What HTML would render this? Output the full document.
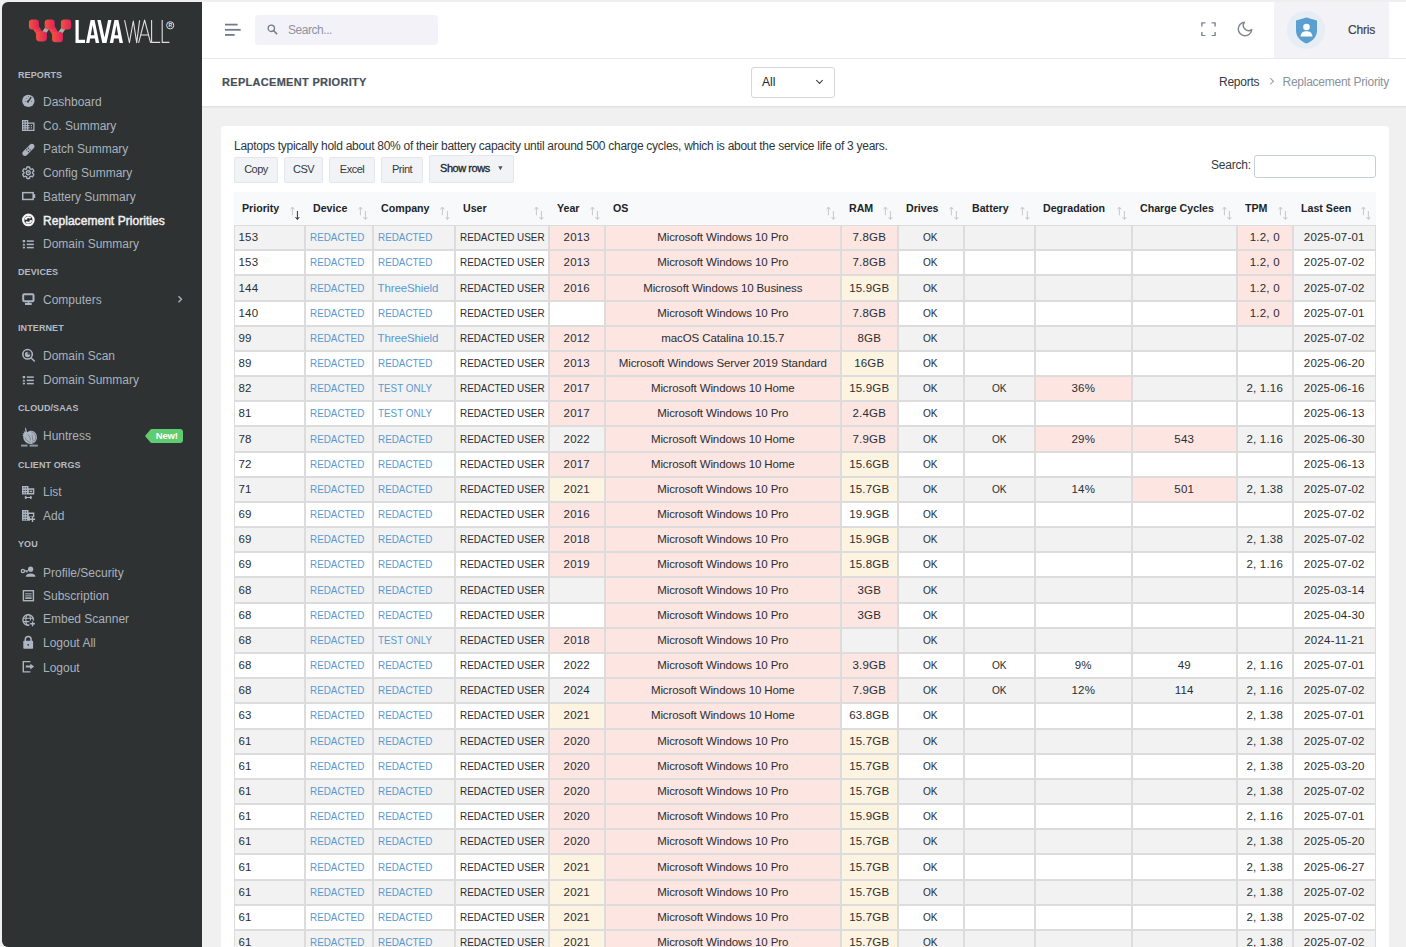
<!DOCTYPE html>
<html><head><meta charset="utf-8">
<style>
*{box-sizing:border-box}
html,body{margin:0;padding:0}
body{width:1406px;height:947px;overflow:hidden;background:#f0f0f0;font-family:"Liberation Sans",sans-serif;position:relative;color:#343a40}
.abs{position:absolute}
#topstrip{left:0;top:0;width:1406px;height:2px;background:#efefef}
#sidebar{left:2px;top:2px;width:200px;height:945px;background:#2e3232;border-top-left-radius:6px;border-bottom-left-radius:6px}
#topbar{left:202px;top:2px;width:1204px;height:57px;background:#fff;border-bottom:1px solid #e9e9ef}
#titlebar{left:202px;top:59px;width:1204px;height:48px;background:#fff;border-bottom:1px solid #e2e2e2;box-shadow:0 1px 1px rgba(0,0,0,.03)}
#card{left:221px;top:126px;width:1168px;height:900px;background:#fff;border-radius:4px}
.sh{position:absolute;left:18px;font-size:9px;font-weight:bold;color:#b4bac3;letter-spacing:0.1px}
.si{position:absolute;left:43px;font-size:12px;color:#a9b1bd;white-space:nowrap}
.si.act{color:#f0f0f0;font-weight:normal;-webkit-text-stroke:0.45px #f0f0f0;letter-spacing:0.05px}
.ic{position:absolute;left:21px;width:14px;height:14px}
/* table */
#tbl{position:absolute;left:234px;top:192px;border-collapse:separate;border-spacing:0;table-layout:fixed;width:1142px;font-size:12px;color:#2a2e33}
#tbl th{height:33px;background:#f8f9fa;text-align:left;font-weight:bold;padding:0 0 1px 8px;position:relative;font-size:11.5px;color:#212529;border:0}
#tbl th svg.si2{position:absolute;right:3px;top:13.7px}
.k{display:inline-block;letter-spacing:0;transform:scaleX(0.859);transform-origin:0 50%}
.kc{display:inline-block;letter-spacing:0;transform:scaleX(0.88);transform-origin:50% 50%}
.m{letter-spacing:-0.11px}
.hh{display:inline-block;transform:scaleX(0.925);transform-origin:0 50%}
#tbl tr{height:25.178px}
#tbl td{border:1px solid #dcdcdc;vertical-align:top;padding:0 4px 0 3.5px;line-height:14px;white-space:nowrap;overflow:hidden;font-size:11.5px;letter-spacing:0.2px}
#tbl tr.o td{background:#f2f2f2}
#tbl tr.e td{background:#fff}
#tbl td.c{text-align:center}
#tbl tr td.p{background:#fde5e1}
#tbl tr td.y{background:#fdf3e1}
#tbl td.lk{color:#5a99d0}
.btn{position:absolute;top:157px;height:26px;background:#f1f3f6;border:1px solid #e3e6ea;border-radius:2px;font-size:11px;letter-spacing:-0.5px;color:#343a40;text-align:center;line-height:22.5px}
</style></head><body>
<div id="topstrip" class="abs"></div>
<div id="sidebar" class="abs"></div>
<svg class="abs" style="left:0;top:0" width="200" height="60" viewBox="0 0 200 60">
<defs><linearGradient id="lg" x1="0" x2="1" y1="0" y2="0"><stop offset="0" stop-color="#f0553f"/><stop offset="1" stop-color="#e2225b"/></linearGradient></defs>
<g stroke="#a7afb2" stroke-width="4.2"><line x1="41.5" y1="36.3" x2="49.7" y2="24.6"/><line x1="57.5" y1="36.9" x2="66" y2="24.6"/></g>
<g fill="url(#lg)" stroke="url(#lg)">
<line x1="33.9" y1="24.6" x2="41.5" y2="36.3" stroke-width="6.5"/><line x1="49.7" y1="24.6" x2="57.5" y2="36.9" stroke-width="6.5"/>
</g>
<g fill="url(#lg)">
<rect x="28.9" y="19.6" width="10" height="10" rx="3.3"/><rect x="44.7" y="19.6" width="10" height="10" rx="3.3"/><rect x="60.9" y="19.6" width="10.3" height="10" rx="3.3"/>
<rect x="36.1" y="31.4" width="10.8" height="10" rx="3.3"/><rect x="52.1" y="31.7" width="10.8" height="10.5" rx="3.3"/>
</g>
<g fill="#fff">
<path d="M75.5 20h3.2v19.8h6.3V43h-9.5z"/>
<path fill-rule="evenodd" d="M86 43l4.6-23h4l4.6 23h-3.5l-.8-4.4h-4.7l-.8 4.4z M90.8 35.3h3.6l-1.8-10z"/>
<path d="M97.3 20h3.4l3.8 17.5 3.6-17.5h3.4l-5 23h-4.2z"/>
<path fill-rule="evenodd" d="M109.8 43l4.6-23h4l4.6 23h-3.5l-.8-4.4h-4.7l-.8 4.4z M114.6 35.3h3.6l-1.8-10z"/>
</g>
<g fill="none" stroke="#dedede" stroke-width="1.1" stroke-linejoin="round">
<polyline points="124.6,20.2 129.4,42.6 133.3,21 136.7,42.6 139.6,20.2"/>
<polyline points="138.6,42.8 144.6,20 150.6,42.8"/><line x1="140.6" y1="35" x2="148.6" y2="35"/>
<polyline points="151.6,20 151.6,42.4 160.2,42.4"/>
<polyline points="162.2,20 162.2,42.4 169.4,42.4"/>
<circle cx="170.2" cy="25.3" r="3.6" stroke-width="1"/>
</g>
<text x="170.2" y="27.2" font-size="5" font-family="Liberation Sans" font-weight="bold" fill="#e8e8e8" text-anchor="middle">R</text>
</svg>
<svg class="abs" style="left:0;top:0" width="200" height="700" viewBox="0 0 200 700"><circle cx="28.35" cy="100.95" r="6.15" fill="#adb5c2"/><line x1="28" y1="101.6" x2="30.9" y2="97.6" stroke="#2e3232" stroke-width="1.4" stroke-linecap="round"/><circle cx="27.9" cy="101.6" r="1.1" fill="#2e3232"/><circle cx="25.3" cy="101.2" r="0.45" fill="#2e3232"/><circle cx="26.3" cy="98.2" r="0.45" fill="#2e3232"/><circle cx="28.4" cy="96.7" r="0.45" fill="#2e3232"/><circle cx="31.5" cy="101.2" r="0.45" fill="#2e3232"/><g transform="translate(20.75,118.2) scale(0.625,0.61)" fill="#adb5c2"><path d="M18,15H16V17H18M18,11H16V13H18M20,19H12V17H14V15H12V13H14V11H12V9H20M10,7H8V5H10M10,11H8V9H10M10,15H8V13H10M10,19H8V17H10M6,7H4V5H6M6,11H4V9H6M6,15H4V13H6M6,19H4V17H6M12,7V3H2V21H22V7H12Z"/></g><g transform="translate(21.1,142.6) scale(0.61)"><path d="M20.7 3.3c-1.7-1.7-4.3-1.7-6 0L3.3 14.7c-1.7 1.7-1.7 4.3 0 6s4.3 1.7 6 0L20.7 9.3c1.7-1.7 1.7-4.3 0-6z" fill="#adb5c2"/><circle cx="12" cy="9.3" r="1.1" fill="#2e3232"/><circle cx="9.3" cy="12" r="1.1" fill="#2e3232"/><circle cx="14.7" cy="12" r="1.1" fill="#2e3232"/><circle cx="12" cy="14.7" r="1.1" fill="#2e3232"/></g><g transform="translate(21.35,165.85) scale(0.575)"><path d="M12,15.5A3.5,3.5 0 0,1 8.5,12A3.5,3.5 0 0,1 12,8.5A3.5,3.5 0 0,1 15.5,12A3.5,3.5 0 0,1 12,15.5M19.43,12.97C19.47,12.65 19.5,12.33 19.5,12C19.5,11.67 19.47,11.34 19.43,11L21.54,9.37C21.73,9.22 21.78,8.95 21.66,8.73L19.66,5.27C19.54,5.05 19.27,4.96 19.05,5.05L16.56,6.05C16.04,5.66 15.5,5.32 14.87,5.07L14.5,2.42C14.46,2.18 14.25,2 14,2H10C9.75,2 9.54,2.18 9.5,2.42L9.13,5.07C8.5,5.32 7.96,5.66 7.44,6.05L4.95,5.05C4.73,4.96 4.46,5.05 4.34,5.27L2.34,8.73C2.21,8.95 2.27,9.22 2.46,9.37L4.57,11C4.53,11.34 4.5,11.67 4.5,12C4.5,12.33 4.53,12.65 4.57,12.97L2.46,14.63C2.27,14.78 2.21,15.05 2.34,15.27L4.34,18.73C4.46,18.95 4.73,19.03 4.95,18.95L7.44,17.94C7.96,18.34 8.5,18.68 9.13,18.93L9.5,21.58C9.54,21.82 9.75,22 10,22H14C14.25,22 14.46,21.82 14.5,21.58L14.87,18.93C15.5,18.67 16.04,18.34 16.56,17.94L19.05,18.95C19.27,19.03 19.54,18.95 19.66,18.73L21.66,15.27C21.78,15.05 21.73,14.78 21.54,14.63L19.43,12.97Z" fill="none" stroke="#adb5c2" stroke-width="2.3" stroke-linejoin="round"/><circle cx="12" cy="12" r="1.3" fill="#adb5c2"/></g><rect x="22.75" y="192.65" width="10.4" height="6.8" fill="none" stroke="#adb5c2" stroke-width="1.5"/><rect x="33.1" y="194.2" width="2.1" height="3.8" fill="#adb5c2"/><circle cx="28.35" cy="219.95" r="5.2" fill="none" stroke="#f4f4f4" stroke-width="2.3"/><path d="M25.6 219.4 A2.8 2.8 0 0 1 30.6 218.3" fill="none" stroke="#f4f4f4" stroke-width="1.9"/><path d="M31.1 220.5 A2.8 2.8 0 0 1 26.1 221.6" fill="none" stroke="#f4f4f4" stroke-width="1.9"/><path d="M24.3 219.6 L27.3 219.6 L25.8 217.2Z" fill="#f4f4f4"/><path d="M32.4 220.3 L29.4 220.3 L30.9 222.7Z" fill="#f4f4f4"/><rect x="22.7" y="240.0" width="2.4" height="2.2" fill="#adb5c2"/><path d="M23.9 243.0 L25.4 245.5 L22.4 245.5Z" fill="#adb5c2"/><circle cx="23.9" cy="247.6" r="1.15" fill="#adb5c2"/><rect x="26.8" y="240.35" width="7" height="1.5" fill="#adb5c2"/><rect x="26.8" y="243.65" width="7" height="1.5" fill="#adb5c2"/><rect x="26.8" y="246.85" width="7" height="1.5" fill="#adb5c2"/><rect x="22.7" y="376.0" width="2.4" height="2.2" fill="#adb5c2"/><path d="M23.9 379.0 L25.4 381.5 L22.4 381.5Z" fill="#adb5c2"/><circle cx="23.9" cy="383.59999999999997" r="1.15" fill="#adb5c2"/><rect x="26.8" y="376.34999999999997" width="7" height="1.5" fill="#adb5c2"/><rect x="26.8" y="379.65" width="7" height="1.5" fill="#adb5c2"/><rect x="26.8" y="382.84999999999997" width="7" height="1.5" fill="#adb5c2"/><rect x="23.2" y="294.2" width="10.3" height="7" rx="1" fill="none" stroke="#adb5c2" stroke-width="2"/><rect x="27.8" y="302" width="1.4" height="1.5" fill="#adb5c2"/><rect x="25" y="302.9" width="6.7" height="2.1" fill="#adb5c2"/><polyline points="178.5,296.3 181.5,299.3 178.5,302.3" fill="none" stroke="#adb5c2" stroke-width="1.3"/><circle cx="27.55" cy="354.3" r="4.75" fill="none" stroke="#adb5c2" stroke-width="1.6"/><line x1="31.2" y1="358" x2="34.3" y2="361" stroke="#adb5c2" stroke-width="1.6" stroke-linecap="round"/><path d="M27.6 351.8 A2.7 2.7 0 1 0 30.3 354.5 L27.6 354.5Z" fill="#adb5c2"/><path d="M28.3 351.8 A2.7 2.7 0 0 1 30.3 353.8 L28.3 353.8Z" fill="#adb5c2" opacity="0.35"/><g fill="#adb5c2"><path d="M25.4 427.2 C26.6 428.8 26.4 431 27.2 432.2 L29.5 431 C31.2 430.5 33 430.9 34.2 431.8 C36.2 433.3 37.2 435.6 36.9 438.2 C36.6 441.2 34.4 443.4 31.5 443.9 C28.5 444.3 25.8 443 24.3 440.6 C23.4 439.1 23.1 437.6 23.3 436.2 L22.2 435.6 L23.6 434.9 L22.4 433.4 L24.4 433.2 L23.6 431.2 L25.6 431.9 C25 430.2 24.9 428.7 25.4 427.2Z"/></g><path d="M31 431.7 C34 432.3 35.8 434.8 35.7 437.8 C35.6 440.3 34 442.2 31.8 442.8 M27.5 434.5 C29.6 435.6 30.6 437.8 30.2 440.6 M25 437.6 C26 440.2 28.2 442 30.6 442.6 M32 434.6 L33 441" fill="none" stroke="#2e3232" stroke-width="0.65" opacity="0.55"/><rect x="21" y="444.6" width="6.6" height="2" fill="#adb5c2" opacity="0.75"/><rect x="29.6" y="444.6" width="8.2" height="2" fill="#adb5c2" opacity="0.75"/><path d="M22 485.9 H28.5 V488.3 H34.3 V494.5 H22Z" fill="#adb5c2"/><rect x="23.5" y="487.3" width="1.1" height="1.1" fill="#2e3232"/><rect x="25.8" y="487.3" width="1.1" height="1.1" fill="#2e3232"/><rect x="23.5" y="489.9" width="1.1" height="1.1" fill="#2e3232"/><rect x="25.8" y="489.9" width="1.1" height="1.1" fill="#2e3232"/><rect x="23.5" y="492.3" width="1.1" height="1.1" fill="#2e3232"/><rect x="25.8" y="492.3" width="1.1" height="1.1" fill="#2e3232"/><rect x="28.9" y="489.8" width="4" height="3.2" fill="#2e3232"/><rect x="29.6" y="490.6" width="2.5" height="1.6" fill="#adb5c2"/><path d="M24.8 497.5 H31.8 M24.8 497.5 L26.4 496.1 M24.8 497.5 L26.4 498.9 M31.8 497.5 L30.2 496.1 M31.8 497.5 L30.2 498.9" stroke="#adb5c2" stroke-width="1.2" fill="none"/><path d="M22 510 H28.5 V512.6 H34.3 V517 H30 V520.8 H22Z" fill="#adb5c2"/><rect x="23.5" y="511.4" width="1.1" height="1.1" fill="#2e3232"/><rect x="25.8" y="511.4" width="1.1" height="1.1" fill="#2e3232"/><rect x="23.5" y="514" width="1.1" height="1.1" fill="#2e3232"/><rect x="25.8" y="514" width="1.1" height="1.1" fill="#2e3232"/><rect x="23.5" y="516.6" width="1.1" height="1.1" fill="#2e3232"/><rect x="25.8" y="516.6" width="1.1" height="1.1" fill="#2e3232"/><rect x="23.5" y="519.1" width="1.1" height="1.1" fill="#2e3232"/><rect x="25.8" y="519.1" width="1.1" height="1.1" fill="#2e3232"/><rect x="28.9" y="514" width="4" height="2.5" fill="#2e3232"/><path d="M32.5 516.6 V522 M29.9 519.3 H35.1" stroke="#adb5c2" stroke-width="1.4"/><circle cx="22.9" cy="570.9" r="1.6" fill="none" stroke="#adb5c2" stroke-width="1.3"/><path d="M24.5 570.9 H28 M26.8 570.9 V572.6" stroke="#adb5c2" stroke-width="1.3"/><circle cx="30.6" cy="569.2" r="2.6" fill="#adb5c2"/><path d="M25.7 576.8 C25.9 574.2 28 573.4 30.6 573.4 C33.2 573.4 35.3 574.2 35.5 576.8Z" fill="#adb5c2"/><rect x="23.4" y="590.7" width="10" height="10" fill="none" stroke="#adb5c2" stroke-width="1.4"/><rect x="25.2" y="593.3" width="6.5" height="1" fill="#adb5c2"/><rect x="25.2" y="595.4" width="6.5" height="1" fill="#adb5c2"/><rect x="25.2" y="597.3" width="6.5" height="1.6" fill="#adb5c2"/><circle cx="28.2" cy="619.9" r="5.3" fill="none" stroke="#adb5c2" stroke-width="1.4"/><ellipse cx="28.2" cy="619.9" rx="2.3" ry="5.3" fill="none" stroke="#adb5c2" stroke-width="1.1"/><path d="M23 618.2 H33.4 M23 621.6 H33.4" stroke="#adb5c2" stroke-width="1.1"/><rect x="29.3" y="620.5" width="6.5" height="6.5" fill="#2e3232"/><path d="M32.6 621.4 V626.2 M30.2 623.8 H35" stroke="#adb5c2" stroke-width="1.4"/><path d="M25.3 641.5 V639.5 A2.9 2.9 0 0 1 31.1 639.5 V641.5" fill="none" stroke="#adb5c2" stroke-width="1.5"/><rect x="23.3" y="640.8" width="9.8" height="8" rx="0.8" fill="#adb5c2"/><circle cx="28.2" cy="644.8" r="0.9" fill="#2e3232"/><path d="M30.4 661.6 H23.3 V671.9 H30.4" fill="none" stroke="#adb5c2" stroke-width="1.4"/><path d="M25.8 665.6 H30.3 V663.8 L34.1 666.6 L30.3 669.4 V667.6 H25.8Z" fill="#adb5c2"/></svg>
<div class="sh" style="top:70.4px">REPORTS</div>
<div class="si" style="top:95.0px">Dashboard</div>
<div class="si" style="top:118.7px">Co. Summary</div>
<div class="si" style="top:142.4px">Patch Summary</div>
<div class="si" style="top:166.1px">Config Summary</div>
<div class="si" style="top:189.8px">Battery Summary</div>
<div class="si act" style="top:213.5px">Replacement Priorities</div>
<div class="si" style="top:237.2px">Domain Summary</div>
<div class="sh" style="top:267.2px">DEVICES</div>
<div class="si" style="top:293.3px">Computers</div>
<div class="sh" style="top:323px">INTERNET</div>
<div class="si" style="top:349.0px">Domain Scan</div>
<div class="si" style="top:373.4px">Domain Summary</div>
<div class="sh" style="top:403.3px">CLOUD/SAAS</div>
<div class="si" style="top:428.9px">Huntress</div>
<div class="sh" style="top:459.8px">CLIENT ORGS</div>
<div class="si" style="top:485.4px">List</div>
<div class="si" style="top:509.3px">Add</div>
<div class="sh" style="top:539px">YOU</div>
<div class="si" style="top:565.6px">Profile/Security</div>
<div class="si" style="top:589.0px">Subscription</div>
<div class="si" style="top:612.0px">Embed Scanner</div>
<div class="si" style="top:636.0px">Logout All</div>
<div class="si" style="top:660.5px">Logout</div>
<div class="abs" style="left:145px;top:428.5px;width:0;height:0;border-top:7.25px solid transparent;border-bottom:7.25px solid transparent;border-right:6px solid #60cc72"></div>
<div class="abs" style="left:150.5px;top:428.5px;width:32.5px;height:14.5px;background:#60cc72;border-radius:0 3px 3px 0;color:#fff;font-weight:bold;font-size:9.5px;line-height:14.5px;text-align:center;letter-spacing:-0.2px">New!</div>
<div id="topbar" class="abs"></div>
<div id="titlebar" class="abs"></div>
<div id="card" class="abs"></div>

<!-- topbar -->
<svg class="abs" style="left:224px;top:23px" width="18" height="14" viewBox="0 0 18 14"><g stroke="#737787" stroke-width="1.75"><line x1="1" y1="1.6" x2="13.6" y2="1.6"/><line x1="1" y1="6.8" x2="16.7" y2="6.8"/><line x1="1" y1="11.9" x2="10.7" y2="11.9"/></g></svg>
<div class="abs" style="left:255px;top:15px;width:183px;height:30px;background:#f3f2f8;border-radius:4px"></div>
<svg class="abs" style="left:266.5px;top:24px" width="11" height="11" viewBox="0 0 11 11"><circle cx="4.3" cy="4.3" r="3.2" fill="none" stroke="#757988" stroke-width="1.3"/><line x1="6.7" y1="6.7" x2="10.1" y2="10.1" stroke="#757988" stroke-width="1.5"/></svg>
<div class="abs" style="left:288px;top:23px;font-size:12px;line-height:14px;color:#8f94a0;letter-spacing:-0.45px">Search...</div>
<svg class="abs" style="left:1200.5px;top:21.5px" width="15" height="14.5" viewBox="0 0 15 14.5"><g fill="none" stroke="#80848f" stroke-width="1.4"><polyline points="0.9,4.6 0.9,0.9 4.4,0.9"/><polyline points="10.6,0.9 14.1,0.9 14.1,4.6"/><polyline points="14.1,9.9 14.1,13.6 10.6,13.6"/><polyline points="4.4,13.6 0.9,13.6 0.9,9.9"/></g></svg>
<svg class="abs" style="left:1235.5px;top:19.5px" width="18" height="18" viewBox="0 0 24 24"><path d="M21 12.79A9 9 0 1 1 11.21 3 7 7 0 0 0 21 12.79z" fill="none" stroke="#80848f" stroke-width="1.9" stroke-linejoin="round"/></svg>
<div class="abs" style="left:1274px;top:2px;width:115px;height:56px;background:#f2f2f7"></div>
<div class="abs" style="left:1287px;top:11px;width:38px;height:38px;border-radius:50%;background:#e6edf5"></div>
<svg class="abs" style="left:1294.5px;top:16.5px" width="23" height="27" viewBox="0 0 23 27"><path d="M11.5 0.5 L22 3.5 V13.5 C22 20 17 24.5 11.5 26.5 C6 24.5 1 20 1 13.5 V3.5 Z" fill="#5b9fd0"/><circle cx="11.5" cy="10" r="3.3" fill="#fff"/><path d="M5.5 19.5 C6 15.5 8.5 14.3 11.5 14.3 C14.5 14.3 17 15.5 17.5 19.5Z" fill="#fff"/></svg>
<div class="abs" style="left:1348px;top:23px;font-size:12px;line-height:14px;color:#3e4249;-webkit-text-stroke:0.2px #3e4249;letter-spacing:-0.2px">Chris</div>
<!-- titlebar -->
<div class="abs" style="left:751px;top:67px;width:84px;height:31px;border:1px solid #d3d7dd;border-radius:3px;background:#fff"></div>
<div class="abs" style="left:762px;top:75px;font-size:12px;line-height:14px;color:#212529">All</div>
<div class="abs" style="left:816.5px;top:78px;width:5px;height:5px;border-right:1.4px solid #333;border-bottom:1.4px solid #333;transform:rotate(45deg)"></div>
<div class="abs" style="left:1219px;top:75px;font-size:12px;line-height:14px;color:#343a40;letter-spacing:-0.25px">Reports</div>
<div class="abs" style="left:1267.5px;top:79.3px;width:4.5px;height:4.5px;border-right:1.2px solid #9aa0aa;border-bottom:1.2px solid #9aa0aa;transform:rotate(-45deg)"></div>
<div class="abs" style="left:1282.5px;top:75px;font-size:12px;line-height:14px;color:#8c929c;letter-spacing:-0.25px">Replacement Priority</div>
<!-- search -->
<div class="abs" style="left:1211px;top:158px;font-size:12px;line-height:14px;color:#343a40;letter-spacing:-0.2px">Search:</div>
<div class="abs" style="left:1254px;top:155px;width:122px;height:23px;border:1px solid #c9ced6;border-radius:3px;background:#fff"></div>


<div class="abs" style="left:222px;top:76px;font-size:11px;font-weight:bold;color:#495057;letter-spacing:0.3px;-webkit-text-stroke:0.2px #495057">REPLACEMENT PRIORITY</div>

<div class="abs" style="left:234px;top:139px;font-size:12px;color:#30353a;letter-spacing:-0.28px;white-space:nowrap">Laptops typically hold about 80% of their battery capacity until around 500 charge cycles, which is about the service life of 3 years.</div>
<div class="btn" style="left:234px;width:44px">Copy</div>
<div class="btn" style="left:284px;width:39px">CSV</div>
<div class="btn" style="left:329px;width:46px">Excel</div>
<div class="btn" style="left:381px;width:42px">Print</div>
<div class="btn" style="left:429px;top:155px;width:85px;height:27.5px;line-height:25px;text-align:left;padding-left:10px;font-size:11px;font-weight:normal;-webkit-text-stroke:0.3px #212529;letter-spacing:-0.45px;color:#212529">Show rows</div>
<svg class="abs" style="left:498px;top:166px" width="5" height="5" viewBox="0 0 5 5"><path d="M0.2 0.3H4.6L2.4 4.2Z" fill="#555"/></svg>

<table id="tbl"><colgroup><col style="width:71px"><col style="width:68px"><col style="width:82px"><col style="width:94px"><col style="width:56px"><col style="width:236px"><col style="width:57px"><col style="width:66px"><col style="width:71px"><col style="width:97px"><col style="width:105px"><col style="width:56px"><col style="width:83px"></colgroup>
<thead><tr><th><span class="hh">Priority</span><svg class="si2" width="12" height="15" viewBox="0 0 12 15"><path d="M2.4 1.2V9.3M0.5 3.4L2.4 1L4.3 3.4" fill="none" stroke="#c9c9c9" stroke-width="1"/><path d="M7.4 5V13.3M5.5 11L7.4 13.5L9.3 11" fill="none" stroke="#333" stroke-width="1"/></svg></th><th><span class="hh">Device</span><svg class="si2" width="12" height="15" viewBox="0 0 12 15"><path d="M2.4 1.2V9.3M0.5 3.4L2.4 1L4.3 3.4" fill="none" stroke="#c9c9c9" stroke-width="1"/><path d="M7.4 5V13.3M5.5 11L7.4 13.5L9.3 11" fill="none" stroke="#c9c9c9" stroke-width="1"/></svg></th><th><span class="hh">Company</span><svg class="si2" width="12" height="15" viewBox="0 0 12 15"><path d="M2.4 1.2V9.3M0.5 3.4L2.4 1L4.3 3.4" fill="none" stroke="#c9c9c9" stroke-width="1"/><path d="M7.4 5V13.3M5.5 11L7.4 13.5L9.3 11" fill="none" stroke="#c9c9c9" stroke-width="1"/></svg></th><th><span class="hh">User</span><svg class="si2" width="12" height="15" viewBox="0 0 12 15"><path d="M2.4 1.2V9.3M0.5 3.4L2.4 1L4.3 3.4" fill="none" stroke="#c9c9c9" stroke-width="1"/><path d="M7.4 5V13.3M5.5 11L7.4 13.5L9.3 11" fill="none" stroke="#c9c9c9" stroke-width="1"/></svg></th><th><span class="hh">Year</span><svg class="si2" width="12" height="15" viewBox="0 0 12 15"><path d="M2.4 1.2V9.3M0.5 3.4L2.4 1L4.3 3.4" fill="none" stroke="#c9c9c9" stroke-width="1"/><path d="M7.4 5V13.3M5.5 11L7.4 13.5L9.3 11" fill="none" stroke="#c9c9c9" stroke-width="1"/></svg></th><th><span class="hh">OS</span><svg class="si2" width="12" height="15" viewBox="0 0 12 15"><path d="M2.4 1.2V9.3M0.5 3.4L2.4 1L4.3 3.4" fill="none" stroke="#c9c9c9" stroke-width="1"/><path d="M7.4 5V13.3M5.5 11L7.4 13.5L9.3 11" fill="none" stroke="#c9c9c9" stroke-width="1"/></svg></th><th><span class="hh">RAM</span><svg class="si2" width="12" height="15" viewBox="0 0 12 15"><path d="M2.4 1.2V9.3M0.5 3.4L2.4 1L4.3 3.4" fill="none" stroke="#c9c9c9" stroke-width="1"/><path d="M7.4 5V13.3M5.5 11L7.4 13.5L9.3 11" fill="none" stroke="#c9c9c9" stroke-width="1"/></svg></th><th><span class="hh">Drives</span><svg class="si2" width="12" height="15" viewBox="0 0 12 15"><path d="M2.4 1.2V9.3M0.5 3.4L2.4 1L4.3 3.4" fill="none" stroke="#c9c9c9" stroke-width="1"/><path d="M7.4 5V13.3M5.5 11L7.4 13.5L9.3 11" fill="none" stroke="#c9c9c9" stroke-width="1"/></svg></th><th><span class="hh">Battery</span><svg class="si2" width="12" height="15" viewBox="0 0 12 15"><path d="M2.4 1.2V9.3M0.5 3.4L2.4 1L4.3 3.4" fill="none" stroke="#c9c9c9" stroke-width="1"/><path d="M7.4 5V13.3M5.5 11L7.4 13.5L9.3 11" fill="none" stroke="#c9c9c9" stroke-width="1"/></svg></th><th><span class="hh">Degradation</span><svg class="si2" width="12" height="15" viewBox="0 0 12 15"><path d="M2.4 1.2V9.3M0.5 3.4L2.4 1L4.3 3.4" fill="none" stroke="#c9c9c9" stroke-width="1"/><path d="M7.4 5V13.3M5.5 11L7.4 13.5L9.3 11" fill="none" stroke="#c9c9c9" stroke-width="1"/></svg></th><th><span class="hh">Charge Cycles</span><svg class="si2" width="12" height="15" viewBox="0 0 12 15"><path d="M2.4 1.2V9.3M0.5 3.4L2.4 1L4.3 3.4" fill="none" stroke="#c9c9c9" stroke-width="1"/><path d="M7.4 5V13.3M5.5 11L7.4 13.5L9.3 11" fill="none" stroke="#c9c9c9" stroke-width="1"/></svg></th><th><span class="hh">TPM</span><svg class="si2" width="12" height="15" viewBox="0 0 12 15"><path d="M2.4 1.2V9.3M0.5 3.4L2.4 1L4.3 3.4" fill="none" stroke="#c9c9c9" stroke-width="1"/><path d="M7.4 5V13.3M5.5 11L7.4 13.5L9.3 11" fill="none" stroke="#c9c9c9" stroke-width="1"/></svg></th><th><span class="hh">Last Seen</span><svg class="si2" width="12" height="15" viewBox="0 0 12 15"><path d="M2.4 1.2V9.3M0.5 3.4L2.4 1L4.3 3.4" fill="none" stroke="#c9c9c9" stroke-width="1"/><path d="M7.4 5V13.3M5.5 11L7.4 13.5L9.3 11" fill="none" stroke="#c9c9c9" stroke-width="1"/></svg></th></tr></thead>
<tbody>
<tr class="o" style="height:25px"><td style="padding-top:4.10px">153</td><td style="padding-top:4.10px" class="lk"><span class="k">REDACTED</span></td><td style="padding-top:4.10px" class="lk"><span class="k">REDACTED</span></td><td style="padding-top:4.10px"><span class="k">REDACTED USER</span></td><td style="padding-top:4.10px" class="c p">2013</td><td style="padding-top:4.10px" class="c p"><span class="m">Microsoft Windows 10 Pro</span></td><td style="padding-top:4.10px" class="c p">7.8GB</td><td style="padding-top:4.10px" class="c"><span class="kc">OK</span></td><td style="padding-top:4.10px" class="c"></td><td style="padding-top:4.10px" class="c "></td><td style="padding-top:4.10px" class="c "></td><td style="padding-top:4.10px" class="c p">1.2, 0</td><td style="padding-top:4.10px" class="c">2025-07-01</td></tr>
<tr class="e" style="height:25px"><td style="padding-top:4.28px">153</td><td style="padding-top:4.28px" class="lk"><span class="k">REDACTED</span></td><td style="padding-top:4.28px" class="lk"><span class="k">REDACTED</span></td><td style="padding-top:4.28px"><span class="k">REDACTED USER</span></td><td style="padding-top:4.28px" class="c p">2013</td><td style="padding-top:4.28px" class="c p"><span class="m">Microsoft Windows 10 Pro</span></td><td style="padding-top:4.28px" class="c p">7.8GB</td><td style="padding-top:4.28px" class="c"><span class="kc">OK</span></td><td style="padding-top:4.28px" class="c"></td><td style="padding-top:4.28px" class="c "></td><td style="padding-top:4.28px" class="c "></td><td style="padding-top:4.28px" class="c p">1.2, 0</td><td style="padding-top:4.28px" class="c">2025-07-02</td></tr>
<tr class="o" style="height:26px"><td style="padding-top:4.71px">144</td><td style="padding-top:4.71px" class="lk"><span class="k">REDACTED</span></td><td style="padding-top:4.71px" class="lk"><span class="m">ThreeShield</span></td><td style="padding-top:4.71px"><span class="k">REDACTED USER</span></td><td style="padding-top:4.71px" class="c p">2016</td><td style="padding-top:4.71px" class="c p"><span class="m">Microsoft Windows 10 Business</span></td><td style="padding-top:4.71px" class="c y">15.9GB</td><td style="padding-top:4.71px" class="c"><span class="kc">OK</span></td><td style="padding-top:4.71px" class="c"></td><td style="padding-top:4.71px" class="c "></td><td style="padding-top:4.71px" class="c "></td><td style="padding-top:4.71px" class="c p">1.2, 0</td><td style="padding-top:4.71px" class="c">2025-07-02</td></tr>
<tr class="e" style="height:25px"><td style="padding-top:3.64px">140</td><td style="padding-top:3.64px" class="lk"><span class="k">REDACTED</span></td><td style="padding-top:3.64px" class="lk"><span class="k">REDACTED</span></td><td style="padding-top:3.64px"><span class="k">REDACTED USER</span></td><td style="padding-top:3.64px" class="c "></td><td style="padding-top:3.64px" class="c p"><span class="m">Microsoft Windows 10 Pro</span></td><td style="padding-top:3.64px" class="c p">7.8GB</td><td style="padding-top:3.64px" class="c"><span class="kc">OK</span></td><td style="padding-top:3.64px" class="c"></td><td style="padding-top:3.64px" class="c "></td><td style="padding-top:3.64px" class="c "></td><td style="padding-top:3.64px" class="c p">1.2, 0</td><td style="padding-top:3.64px" class="c">2025-07-01</td></tr>
<tr class="o" style="height:25px"><td style="padding-top:3.82px">99</td><td style="padding-top:3.82px" class="lk"><span class="k">REDACTED</span></td><td style="padding-top:3.82px" class="lk"><span class="m">ThreeShield</span></td><td style="padding-top:3.82px"><span class="k">REDACTED USER</span></td><td style="padding-top:3.82px" class="c p">2012</td><td style="padding-top:3.82px" class="c p"><span class="m">macOS Catalina 10.15.7</span></td><td style="padding-top:3.82px" class="c p">8GB</td><td style="padding-top:3.82px" class="c"><span class="kc">OK</span></td><td style="padding-top:3.82px" class="c"></td><td style="padding-top:3.82px" class="c "></td><td style="padding-top:3.82px" class="c "></td><td style="padding-top:3.82px" class="c "></td><td style="padding-top:3.82px" class="c">2025-07-02</td></tr>
<tr class="e" style="height:25px"><td style="padding-top:4.00px">89</td><td style="padding-top:4.00px" class="lk"><span class="k">REDACTED</span></td><td style="padding-top:4.00px" class="lk"><span class="k">REDACTED</span></td><td style="padding-top:4.00px"><span class="k">REDACTED USER</span></td><td style="padding-top:4.00px" class="c p">2013</td><td style="padding-top:4.00px" class="c p"><span class="m">Microsoft Windows Server 2019 Standard</span></td><td style="padding-top:4.00px" class="c y">16GB</td><td style="padding-top:4.00px" class="c"><span class="kc">OK</span></td><td style="padding-top:4.00px" class="c"></td><td style="padding-top:4.00px" class="c "></td><td style="padding-top:4.00px" class="c "></td><td style="padding-top:4.00px" class="c "></td><td style="padding-top:4.00px" class="c">2025-06-20</td></tr>
<tr class="o" style="height:25px"><td style="padding-top:4.17px">82</td><td style="padding-top:4.17px" class="lk"><span class="k">REDACTED</span></td><td style="padding-top:4.17px" class="lk"><span class="k">TEST ONLY</span></td><td style="padding-top:4.17px"><span class="k">REDACTED USER</span></td><td style="padding-top:4.17px" class="c p">2017</td><td style="padding-top:4.17px" class="c p"><span class="m">Microsoft Windows 10 Home</span></td><td style="padding-top:4.17px" class="c y">15.9GB</td><td style="padding-top:4.17px" class="c"><span class="kc">OK</span></td><td style="padding-top:4.17px" class="c"><span class=kc>OK</span></td><td style="padding-top:4.17px" class="c p">36%</td><td style="padding-top:4.17px" class="c "></td><td style="padding-top:4.17px" class="c ">2, 1.16</td><td style="padding-top:4.17px" class="c">2025-06-16</td></tr>
<tr class="e" style="height:25px"><td style="padding-top:4.35px">81</td><td style="padding-top:4.35px" class="lk"><span class="k">REDACTED</span></td><td style="padding-top:4.35px" class="lk"><span class="k">TEST ONLY</span></td><td style="padding-top:4.35px"><span class="k">REDACTED USER</span></td><td style="padding-top:4.35px" class="c p">2017</td><td style="padding-top:4.35px" class="c p"><span class="m">Microsoft Windows 10 Pro</span></td><td style="padding-top:4.35px" class="c p">2.4GB</td><td style="padding-top:4.35px" class="c"><span class="kc">OK</span></td><td style="padding-top:4.35px" class="c"></td><td style="padding-top:4.35px" class="c "></td><td style="padding-top:4.35px" class="c "></td><td style="padding-top:4.35px" class="c "></td><td style="padding-top:4.35px" class="c">2025-06-13</td></tr>
<tr class="o" style="height:26px"><td style="padding-top:4.53px">78</td><td style="padding-top:4.53px" class="lk"><span class="k">REDACTED</span></td><td style="padding-top:4.53px" class="lk"><span class="k">REDACTED</span></td><td style="padding-top:4.53px"><span class="k">REDACTED USER</span></td><td style="padding-top:4.53px" class="c ">2022</td><td style="padding-top:4.53px" class="c p"><span class="m">Microsoft Windows 10 Home</span></td><td style="padding-top:4.53px" class="c p">7.9GB</td><td style="padding-top:4.53px" class="c"><span class="kc">OK</span></td><td style="padding-top:4.53px" class="c"><span class=kc>OK</span></td><td style="padding-top:4.53px" class="c p">29%</td><td style="padding-top:4.53px" class="c p">543</td><td style="padding-top:4.53px" class="c ">2, 1.16</td><td style="padding-top:4.53px" class="c">2025-06-30</td></tr>
<tr class="e" style="height:25px"><td style="padding-top:3.71px">72</td><td style="padding-top:3.71px" class="lk"><span class="k">REDACTED</span></td><td style="padding-top:3.71px" class="lk"><span class="k">REDACTED</span></td><td style="padding-top:3.71px"><span class="k">REDACTED USER</span></td><td style="padding-top:3.71px" class="c p">2017</td><td style="padding-top:3.71px" class="c p"><span class="m">Microsoft Windows 10 Home</span></td><td style="padding-top:3.71px" class="c y">15.6GB</td><td style="padding-top:3.71px" class="c"><span class="kc">OK</span></td><td style="padding-top:3.71px" class="c"></td><td style="padding-top:3.71px" class="c "></td><td style="padding-top:3.71px" class="c "></td><td style="padding-top:3.71px" class="c "></td><td style="padding-top:3.71px" class="c">2025-06-13</td></tr>
<tr class="o" style="height:25px"><td style="padding-top:3.88px">71</td><td style="padding-top:3.88px" class="lk"><span class="k">REDACTED</span></td><td style="padding-top:3.88px" class="lk"><span class="k">REDACTED</span></td><td style="padding-top:3.88px"><span class="k">REDACTED USER</span></td><td style="padding-top:3.88px" class="c y">2021</td><td style="padding-top:3.88px" class="c p"><span class="m">Microsoft Windows 10 Pro</span></td><td style="padding-top:3.88px" class="c y">15.7GB</td><td style="padding-top:3.88px" class="c"><span class="kc">OK</span></td><td style="padding-top:3.88px" class="c"><span class=kc>OK</span></td><td style="padding-top:3.88px" class="c ">14%</td><td style="padding-top:3.88px" class="c p">501</td><td style="padding-top:3.88px" class="c ">2, 1.38</td><td style="padding-top:3.88px" class="c">2025-07-02</td></tr>
<tr class="e" style="height:25px"><td style="padding-top:4.06px">69</td><td style="padding-top:4.06px" class="lk"><span class="k">REDACTED</span></td><td style="padding-top:4.06px" class="lk"><span class="k">REDACTED</span></td><td style="padding-top:4.06px"><span class="k">REDACTED USER</span></td><td style="padding-top:4.06px" class="c p">2016</td><td style="padding-top:4.06px" class="c p"><span class="m">Microsoft Windows 10 Pro</span></td><td style="padding-top:4.06px" class="c ">19.9GB</td><td style="padding-top:4.06px" class="c"><span class="kc">OK</span></td><td style="padding-top:4.06px" class="c"></td><td style="padding-top:4.06px" class="c "></td><td style="padding-top:4.06px" class="c "></td><td style="padding-top:4.06px" class="c "></td><td style="padding-top:4.06px" class="c">2025-07-02</td></tr>
<tr class="o" style="height:25px"><td style="padding-top:4.24px">69</td><td style="padding-top:4.24px" class="lk"><span class="k">REDACTED</span></td><td style="padding-top:4.24px" class="lk"><span class="k">REDACTED</span></td><td style="padding-top:4.24px"><span class="k">REDACTED USER</span></td><td style="padding-top:4.24px" class="c p">2018</td><td style="padding-top:4.24px" class="c p"><span class="m">Microsoft Windows 10 Pro</span></td><td style="padding-top:4.24px" class="c y">15.9GB</td><td style="padding-top:4.24px" class="c"><span class="kc">OK</span></td><td style="padding-top:4.24px" class="c"></td><td style="padding-top:4.24px" class="c "></td><td style="padding-top:4.24px" class="c "></td><td style="padding-top:4.24px" class="c ">2, 1.38</td><td style="padding-top:4.24px" class="c">2025-07-02</td></tr>
<tr class="e" style="height:25px"><td style="padding-top:4.42px">69</td><td style="padding-top:4.42px" class="lk"><span class="k">REDACTED</span></td><td style="padding-top:4.42px" class="lk"><span class="k">REDACTED</span></td><td style="padding-top:4.42px"><span class="k">REDACTED USER</span></td><td style="padding-top:4.42px" class="c p">2019</td><td style="padding-top:4.42px" class="c p"><span class="m">Microsoft Windows 10 Pro</span></td><td style="padding-top:4.42px" class="c y">15.8GB</td><td style="padding-top:4.42px" class="c"><span class="kc">OK</span></td><td style="padding-top:4.42px" class="c"></td><td style="padding-top:4.42px" class="c "></td><td style="padding-top:4.42px" class="c "></td><td style="padding-top:4.42px" class="c ">2, 1.16</td><td style="padding-top:4.42px" class="c">2025-07-02</td></tr>
<tr class="o" style="height:26px"><td style="padding-top:4.60px">68</td><td style="padding-top:4.60px" class="lk"><span class="k">REDACTED</span></td><td style="padding-top:4.60px" class="lk"><span class="k">REDACTED</span></td><td style="padding-top:4.60px"><span class="k">REDACTED USER</span></td><td style="padding-top:4.60px" class="c "></td><td style="padding-top:4.60px" class="c p"><span class="m">Microsoft Windows 10 Pro</span></td><td style="padding-top:4.60px" class="c p">3GB</td><td style="padding-top:4.60px" class="c"><span class="kc">OK</span></td><td style="padding-top:4.60px" class="c"></td><td style="padding-top:4.60px" class="c "></td><td style="padding-top:4.60px" class="c "></td><td style="padding-top:4.60px" class="c "></td><td style="padding-top:4.60px" class="c">2025-03-14</td></tr>
<tr class="e" style="height:25px"><td style="padding-top:3.78px">68</td><td style="padding-top:3.78px" class="lk"><span class="k">REDACTED</span></td><td style="padding-top:3.78px" class="lk"><span class="k">REDACTED</span></td><td style="padding-top:3.78px"><span class="k">REDACTED USER</span></td><td style="padding-top:3.78px" class="c "></td><td style="padding-top:3.78px" class="c p"><span class="m">Microsoft Windows 10 Pro</span></td><td style="padding-top:3.78px" class="c p">3GB</td><td style="padding-top:3.78px" class="c"><span class="kc">OK</span></td><td style="padding-top:3.78px" class="c"></td><td style="padding-top:3.78px" class="c "></td><td style="padding-top:3.78px" class="c "></td><td style="padding-top:3.78px" class="c "></td><td style="padding-top:3.78px" class="c">2025-04-30</td></tr>
<tr class="o" style="height:25px"><td style="padding-top:3.95px">68</td><td style="padding-top:3.95px" class="lk"><span class="k">REDACTED</span></td><td style="padding-top:3.95px" class="lk"><span class="k">TEST ONLY</span></td><td style="padding-top:3.95px"><span class="k">REDACTED USER</span></td><td style="padding-top:3.95px" class="c p">2018</td><td style="padding-top:3.95px" class="c p"><span class="m">Microsoft Windows 10 Pro</span></td><td style="padding-top:3.95px" class="c "></td><td style="padding-top:3.95px" class="c"><span class="kc">OK</span></td><td style="padding-top:3.95px" class="c"></td><td style="padding-top:3.95px" class="c "></td><td style="padding-top:3.95px" class="c "></td><td style="padding-top:3.95px" class="c "></td><td style="padding-top:3.95px" class="c">2024-11-21</td></tr>
<tr class="e" style="height:25px"><td style="padding-top:4.13px">68</td><td style="padding-top:4.13px" class="lk"><span class="k">REDACTED</span></td><td style="padding-top:4.13px" class="lk"><span class="k">REDACTED</span></td><td style="padding-top:4.13px"><span class="k">REDACTED USER</span></td><td style="padding-top:4.13px" class="c ">2022</td><td style="padding-top:4.13px" class="c p"><span class="m">Microsoft Windows 10 Pro</span></td><td style="padding-top:4.13px" class="c p">3.9GB</td><td style="padding-top:4.13px" class="c"><span class="kc">OK</span></td><td style="padding-top:4.13px" class="c"><span class=kc>OK</span></td><td style="padding-top:4.13px" class="c ">9%</td><td style="padding-top:4.13px" class="c ">49</td><td style="padding-top:4.13px" class="c ">2, 1.16</td><td style="padding-top:4.13px" class="c">2025-07-01</td></tr>
<tr class="o" style="height:25px"><td style="padding-top:4.31px">68</td><td style="padding-top:4.31px" class="lk"><span class="k">REDACTED</span></td><td style="padding-top:4.31px" class="lk"><span class="k">REDACTED</span></td><td style="padding-top:4.31px"><span class="k">REDACTED USER</span></td><td style="padding-top:4.31px" class="c ">2024</td><td style="padding-top:4.31px" class="c p"><span class="m">Microsoft Windows 10 Home</span></td><td style="padding-top:4.31px" class="c p">7.9GB</td><td style="padding-top:4.31px" class="c"><span class="kc">OK</span></td><td style="padding-top:4.31px" class="c"><span class=kc>OK</span></td><td style="padding-top:4.31px" class="c ">12%</td><td style="padding-top:4.31px" class="c ">114</td><td style="padding-top:4.31px" class="c ">2, 1.16</td><td style="padding-top:4.31px" class="c">2025-07-02</td></tr>
<tr class="e" style="height:26px"><td style="padding-top:4.49px">63</td><td style="padding-top:4.49px" class="lk"><span class="k">REDACTED</span></td><td style="padding-top:4.49px" class="lk"><span class="k">REDACTED</span></td><td style="padding-top:4.49px"><span class="k">REDACTED USER</span></td><td style="padding-top:4.49px" class="c y">2021</td><td style="padding-top:4.49px" class="c p"><span class="m">Microsoft Windows 10 Home</span></td><td style="padding-top:4.49px" class="c ">63.8GB</td><td style="padding-top:4.49px" class="c"><span class="kc">OK</span></td><td style="padding-top:4.49px" class="c"></td><td style="padding-top:4.49px" class="c "></td><td style="padding-top:4.49px" class="c "></td><td style="padding-top:4.49px" class="c ">2, 1.38</td><td style="padding-top:4.49px" class="c">2025-07-01</td></tr>
<tr class="o" style="height:25px"><td style="padding-top:3.66px">61</td><td style="padding-top:3.66px" class="lk"><span class="k">REDACTED</span></td><td style="padding-top:3.66px" class="lk"><span class="k">REDACTED</span></td><td style="padding-top:3.66px"><span class="k">REDACTED USER</span></td><td style="padding-top:3.66px" class="c p">2020</td><td style="padding-top:3.66px" class="c p"><span class="m">Microsoft Windows 10 Pro</span></td><td style="padding-top:3.66px" class="c y">15.7GB</td><td style="padding-top:3.66px" class="c"><span class="kc">OK</span></td><td style="padding-top:3.66px" class="c"></td><td style="padding-top:3.66px" class="c "></td><td style="padding-top:3.66px" class="c "></td><td style="padding-top:3.66px" class="c ">2, 1.38</td><td style="padding-top:3.66px" class="c">2025-07-02</td></tr>
<tr class="e" style="height:25px"><td style="padding-top:3.84px">61</td><td style="padding-top:3.84px" class="lk"><span class="k">REDACTED</span></td><td style="padding-top:3.84px" class="lk"><span class="k">REDACTED</span></td><td style="padding-top:3.84px"><span class="k">REDACTED USER</span></td><td style="padding-top:3.84px" class="c p">2020</td><td style="padding-top:3.84px" class="c p"><span class="m">Microsoft Windows 10 Pro</span></td><td style="padding-top:3.84px" class="c y">15.7GB</td><td style="padding-top:3.84px" class="c"><span class="kc">OK</span></td><td style="padding-top:3.84px" class="c"></td><td style="padding-top:3.84px" class="c "></td><td style="padding-top:3.84px" class="c "></td><td style="padding-top:3.84px" class="c ">2, 1.38</td><td style="padding-top:3.84px" class="c">2025-03-20</td></tr>
<tr class="o" style="height:25px"><td style="padding-top:4.02px">61</td><td style="padding-top:4.02px" class="lk"><span class="k">REDACTED</span></td><td style="padding-top:4.02px" class="lk"><span class="k">REDACTED</span></td><td style="padding-top:4.02px"><span class="k">REDACTED USER</span></td><td style="padding-top:4.02px" class="c p">2020</td><td style="padding-top:4.02px" class="c p"><span class="m">Microsoft Windows 10 Pro</span></td><td style="padding-top:4.02px" class="c y">15.7GB</td><td style="padding-top:4.02px" class="c"><span class="kc">OK</span></td><td style="padding-top:4.02px" class="c"></td><td style="padding-top:4.02px" class="c "></td><td style="padding-top:4.02px" class="c "></td><td style="padding-top:4.02px" class="c ">2, 1.38</td><td style="padding-top:4.02px" class="c">2025-07-02</td></tr>
<tr class="e" style="height:25px"><td style="padding-top:4.20px">61</td><td style="padding-top:4.20px" class="lk"><span class="k">REDACTED</span></td><td style="padding-top:4.20px" class="lk"><span class="k">REDACTED</span></td><td style="padding-top:4.20px"><span class="k">REDACTED USER</span></td><td style="padding-top:4.20px" class="c p">2020</td><td style="padding-top:4.20px" class="c p"><span class="m">Microsoft Windows 10 Pro</span></td><td style="padding-top:4.20px" class="c y">15.9GB</td><td style="padding-top:4.20px" class="c"><span class="kc">OK</span></td><td style="padding-top:4.20px" class="c"></td><td style="padding-top:4.20px" class="c "></td><td style="padding-top:4.20px" class="c "></td><td style="padding-top:4.20px" class="c ">2, 1.16</td><td style="padding-top:4.20px" class="c">2025-07-01</td></tr>
<tr class="o" style="height:25px"><td style="padding-top:4.38px">61</td><td style="padding-top:4.38px" class="lk"><span class="k">REDACTED</span></td><td style="padding-top:4.38px" class="lk"><span class="k">REDACTED</span></td><td style="padding-top:4.38px"><span class="k">REDACTED USER</span></td><td style="padding-top:4.38px" class="c p">2020</td><td style="padding-top:4.38px" class="c p"><span class="m">Microsoft Windows 10 Pro</span></td><td style="padding-top:4.38px" class="c y">15.7GB</td><td style="padding-top:4.38px" class="c"><span class="kc">OK</span></td><td style="padding-top:4.38px" class="c"></td><td style="padding-top:4.38px" class="c "></td><td style="padding-top:4.38px" class="c "></td><td style="padding-top:4.38px" class="c ">2, 1.38</td><td style="padding-top:4.38px" class="c">2025-05-20</td></tr>
<tr class="e" style="height:26px"><td style="padding-top:4.56px">61</td><td style="padding-top:4.56px" class="lk"><span class="k">REDACTED</span></td><td style="padding-top:4.56px" class="lk"><span class="k">REDACTED</span></td><td style="padding-top:4.56px"><span class="k">REDACTED USER</span></td><td style="padding-top:4.56px" class="c y">2021</td><td style="padding-top:4.56px" class="c p"><span class="m">Microsoft Windows 10 Pro</span></td><td style="padding-top:4.56px" class="c y">15.7GB</td><td style="padding-top:4.56px" class="c"><span class="kc">OK</span></td><td style="padding-top:4.56px" class="c"></td><td style="padding-top:4.56px" class="c "></td><td style="padding-top:4.56px" class="c "></td><td style="padding-top:4.56px" class="c ">2, 1.38</td><td style="padding-top:4.56px" class="c">2025-06-27</td></tr>
<tr class="o" style="height:25px"><td style="padding-top:3.73px">61</td><td style="padding-top:3.73px" class="lk"><span class="k">REDACTED</span></td><td style="padding-top:3.73px" class="lk"><span class="k">REDACTED</span></td><td style="padding-top:3.73px"><span class="k">REDACTED USER</span></td><td style="padding-top:3.73px" class="c y">2021</td><td style="padding-top:3.73px" class="c p"><span class="m">Microsoft Windows 10 Pro</span></td><td style="padding-top:3.73px" class="c y">15.7GB</td><td style="padding-top:3.73px" class="c"><span class="kc">OK</span></td><td style="padding-top:3.73px" class="c"></td><td style="padding-top:3.73px" class="c "></td><td style="padding-top:3.73px" class="c "></td><td style="padding-top:3.73px" class="c ">2, 1.38</td><td style="padding-top:3.73px" class="c">2025-07-02</td></tr>
<tr class="e" style="height:25px"><td style="padding-top:3.91px">61</td><td style="padding-top:3.91px" class="lk"><span class="k">REDACTED</span></td><td style="padding-top:3.91px" class="lk"><span class="k">REDACTED</span></td><td style="padding-top:3.91px"><span class="k">REDACTED USER</span></td><td style="padding-top:3.91px" class="c y">2021</td><td style="padding-top:3.91px" class="c p"><span class="m">Microsoft Windows 10 Pro</span></td><td style="padding-top:3.91px" class="c y">15.7GB</td><td style="padding-top:3.91px" class="c"><span class="kc">OK</span></td><td style="padding-top:3.91px" class="c"></td><td style="padding-top:3.91px" class="c "></td><td style="padding-top:3.91px" class="c "></td><td style="padding-top:3.91px" class="c ">2, 1.38</td><td style="padding-top:3.91px" class="c">2025-07-02</td></tr>
<tr class="o" style="height:25px"><td style="padding-top:4.09px">61</td><td style="padding-top:4.09px" class="lk"><span class="k">REDACTED</span></td><td style="padding-top:4.09px" class="lk"><span class="k">REDACTED</span></td><td style="padding-top:4.09px"><span class="k">REDACTED USER</span></td><td style="padding-top:4.09px" class="c y">2021</td><td style="padding-top:4.09px" class="c p"><span class="m">Microsoft Windows 10 Pro</span></td><td style="padding-top:4.09px" class="c y">15.7GB</td><td style="padding-top:4.09px" class="c"><span class="kc">OK</span></td><td style="padding-top:4.09px" class="c"></td><td style="padding-top:4.09px" class="c "></td><td style="padding-top:4.09px" class="c "></td><td style="padding-top:4.09px" class="c ">2, 1.38</td><td style="padding-top:4.09px" class="c">2025-07-02</td></tr>
</tbody></table>
</body></html>
